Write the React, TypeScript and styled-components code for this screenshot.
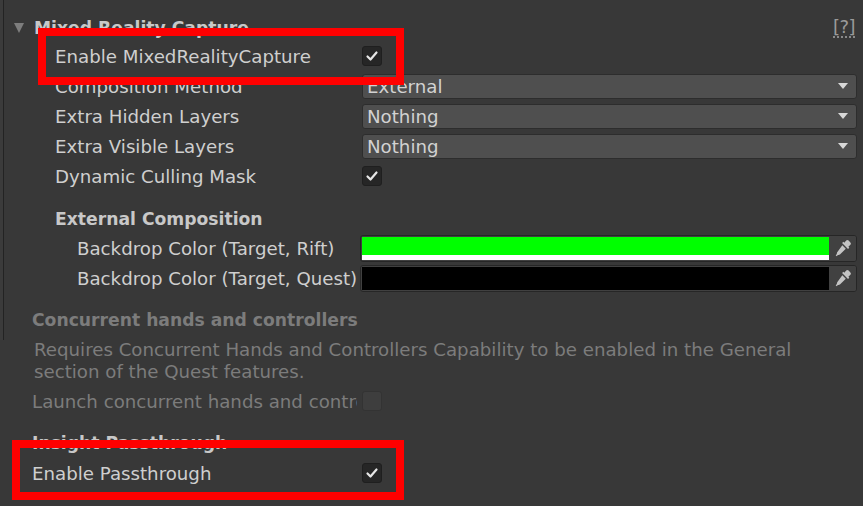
import React from 'react';
import styled, { createGlobalStyle } from 'styled-components';

const GlobalStyle = createGlobalStyle`
	html, body {
		margin: 0;
		padding: 0;
		background: #383838;
	}
	body {
		font-family: 'DejaVu Sans', 'Liberation Sans', sans-serif;
		font-size: 18.2px;
		color: #cfcfcf;
	}
`;

const Inspector = styled.div`
	position: relative;
	display: flex;
	width: 863px;
	height: 506px;
	overflow: hidden;
	background: #383838;
`;

const Gutter = styled.div`
	flex: 0 0 3px;
	height: 340px;
	background: #3b3b3b;
	border-right: 1px solid #232323;
`;

const Content = styled.div`
	flex: 1;
	display: flex;
	flex-direction: column;
	padding: 14px 6px 0 0;
`;

const Foldout = styled.div`
	display: flex;
	align-items: center;
	height: 27px;
	padding-left: 10px;
`;

const FoldArrow = styled.span`
	width: 0;
	height: 0;
	border-left: 5px solid transparent;
	border-right: 5px solid transparent;
	border-top: 10px solid #7d7d7d;
	margin-right: 10px;
`;

const FoldTitle = styled.span`
	flex: 1;
	font-weight: bold;
	font-size: 17.2px;
	color: #c8c8c8;
`;

const HelpIcon = styled.span`
	font-size: 18px;
	color: #9a9a9a;
	border-bottom: 2px dotted #8a8a8a;
	line-height: 18px;
	margin-right: 2px;
	letter-spacing: -0.5px;
`;

const Row = styled.div`
	display: grid;
	grid-template-columns: 358px 1fr;
	align-items: center;
	height: 30px;
`;

const Label = styled.div<{ $indent: number; $muted?: boolean }>`
	margin-right: 5px;
	padding-left: ${(p) => p.$indent}px;
	white-space: nowrap;
	overflow: hidden;
	color: ${(p) => (p.$muted ? '#7c7c7c' : '#cfcfcf')};
`;

const SectionTitle = styled.div<{ $indent: number; $muted?: boolean; $top: number; $height?: number }>`
	display: flex;
	align-items: center;
	height: ${(p) => p.$height ?? 30}px;
	margin-top: ${(p) => p.$top}px;
	padding-left: ${(p) => p.$indent}px;
	font-weight: bold;
	font-size: 17.2px;
	color: ${(p) => (p.$muted ? '#7c7c7c' : '#c8c8c8')};
`;

const HelpText = styled.p`
	margin: 4px 0 3px;
	padding: 0 50px 0 30px;
	line-height: 22px;
	color: #7c7c7c;
`;

const CheckBox = styled.span<{ $disabled?: boolean }>`
	display: flex;
	align-items: center;
	justify-content: center;
	width: 20px;
	height: 20px;
	box-sizing: border-box;
	border-radius: 3px;
	background: ${(p) => (p.$disabled ? '#3e3e3e' : '#262626')};
	border: 1px solid ${(p) => (p.$disabled ? '#333333' : '#1f1f1f')};
`;

const Dropdown = styled.div`
	display: flex;
	align-items: center;
	justify-content: space-between;
	height: 25px;
	box-sizing: border-box;
	padding: 0 8px 0 4px;
	border-radius: 3px;
	background: #4f4f4f;
	border: 1px solid #2d2d2d;
	color: #d2d2d2;
`;

const DropArrow = styled.span`
	width: 0;
	height: 0;
	border-left: 5px solid transparent;
	border-right: 5px solid transparent;
	border-top: 6px solid #d8d8d8;
`;

const ColorField = styled.div`
	display: flex;
	height: 27px;
	margin-left: -2px;
	box-sizing: border-box;
	border: 1px solid #262626;
	border-radius: 3px;
	overflow: hidden;
	background: #404040;
`;

const Swatch = styled.div<{ $color: string; $alpha: string }>`
	flex: 1;
	display: flex;
	flex-direction: column;
	margin: 1px 0 1px 1px;
	background: ${(p) => p.$color};

	&::after {
		content: '';
		margin-top: auto;
		height: 5px;
		background: ${(p) => p.$alpha};
	}
`;

const PickerButton = styled.div`
	flex: 0 0 27px;
	display: flex;
	align-items: center;
	justify-content: center;
	background: #414141;
`;

const Highlight = styled.div<{ $x: number; $y: number; $w: number; $h: number }>`
	position: absolute;
	left: ${(p) => p.$x}px;
	top: ${(p) => p.$y}px;
	width: ${(p) => p.$w}px;
	height: ${(p) => p.$h}px;
	box-sizing: border-box;
	border: 8px solid #ff0000;
	pointer-events: none;
`;

const Check = () => (
	<svg width="14" height="14" viewBox="0 0 14 14">
		<path d="M2.5 7.5 L5.5 10.5 L11.5 3.5" fill="none" stroke="#e6e6e6" strokeWidth="2.2" strokeLinecap="round" strokeLinejoin="round" />
	</svg>
);

const Eyedropper = () => (
	<svg width="18" height="18" viewBox="0 0 18 18">
		<path d="M12.2 1.6 a1.7 1.7 0 0 1 2.4 0 l1.8 1.8 a1.7 1.7 0 0 1 0 2.4 l-2 2 l0.9 0.9 l-1.3 1.3 l-5.9 -5.9 l1.3 -1.3 l0.9 0.9 z" fill="#c4c4c4" />
		<path d="M8.3 6.2 l3.5 3.5 l-5.6 5.6 c-0.7 0.7 -1.6 0.9 -2.3 0.7 l-1.2 1.2 l-1 -1 l1.2 -1.2 c-0.2 -0.7 0 -1.6 0.7 -2.3 z" fill="#c4c4c4" />
	</svg>
);

type Field =
	| { kind: 'check'; checked: boolean; disabled?: boolean }
	| { kind: 'dropdown'; value: string }
	| { kind: 'color'; color: string; alpha: string };

const renderField = (f: Field) => {
	if (f.kind === 'check') {
		return (
			<CheckBox $disabled={f.disabled}>{f.checked && <Check />}</CheckBox>
		);
	}
	if (f.kind === 'dropdown') {
		return (
			<Dropdown>
				{f.value}
				<DropArrow />
			</Dropdown>
		);
	}
	return (
		<ColorField>
			<Swatch $color={f.color} $alpha={f.alpha} />
			<PickerButton>
				<Eyedropper />
			</PickerButton>
		</ColorField>
	);
};

const Property: React.FC<{ label: string; indent: number; field: Field; muted?: boolean }> = ({
	label,
	indent,
	field,
	muted,
}) => (
	<Row>
		<Label $indent={indent} $muted={muted}>
			{label}
		</Label>
		<div>{renderField(field)}</div>
	</Row>
);

export default function App() {
	return (
		<>
			<GlobalStyle />
			<Inspector>
				<Gutter />
				<Content>
					<Foldout>
						<FoldArrow />
						<FoldTitle>Mixed Reality Capture</FoldTitle>
						<HelpIcon>[?]</HelpIcon>
					</Foldout>
					<Property label="Enable MixedRealityCapture" indent={51} field={{ kind: 'check', checked: true }} />
					<Property label="Composition Method" indent={51} field={{ kind: 'dropdown', value: 'External' }} />
					<Property label="Extra Hidden Layers" indent={51} field={{ kind: 'dropdown', value: 'Nothing' }} />
					<Property label="Extra Visible Layers" indent={51} field={{ kind: 'dropdown', value: 'Nothing' }} />
					<Property label="Dynamic Culling Mask" indent={51} field={{ kind: 'check', checked: true }} />

					<SectionTitle $indent={51} $top={13} $height={29}>
						External Composition
					</SectionTitle>
					<Property
						label="Backdrop Color (Target, Rift)"
						indent={73}
						field={{ kind: 'color', color: '#00ff00', alpha: '#ffffff' }}
					/>
					<Property
						label="Backdrop Color (Target, Quest)"
						indent={73}
						field={{ kind: 'color', color: '#000000', alpha: '#000000' }}
					/>

					<SectionTitle $indent={28} $top={12} $muted>
						Concurrent hands and controllers
					</SectionTitle>
					<HelpText>
						Requires Concurrent Hands and Controllers Capability to be enabled in the General section of
						the Quest features.
					</HelpText>
					<Property
						label="Launch concurrent hands and controllers"
						indent={28}
						muted
						field={{ kind: 'check', checked: false, disabled: true }}
					/>

					<SectionTitle $indent={28} $top={12}>
						Insight Passthrough
					</SectionTitle>
					<Property label="Enable Passthrough" indent={28} field={{ kind: 'check', checked: true }} />
				</Content>
				<Highlight $x={38} $y={28} $w={366} $h={57} />
				<Highlight $x={12} $y={440} $w={392} $h={60} />
			</Inspector>
		</>
	);
}
